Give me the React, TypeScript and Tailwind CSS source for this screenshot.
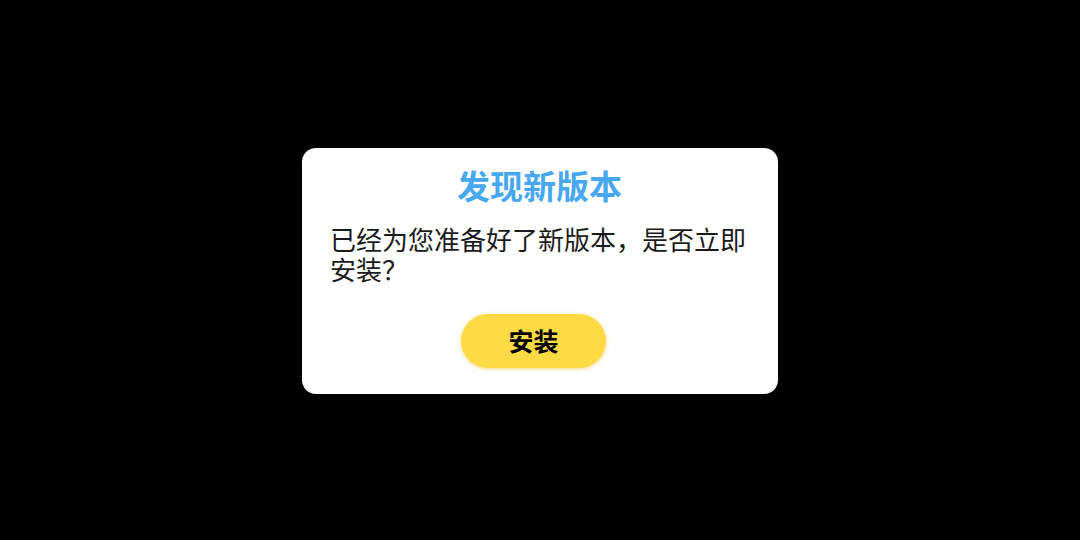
export default function App() {
  return (
    <div
      className="w-[1080px] h-[540px] bg-black flex items-center justify-center"
      style={{ fontFamily: '"Noto Sans CJK SC", "Noto Sans", sans-serif' }}
    >
      <div className="w-[476px] h-[246px] bg-white rounded-[14px] flex flex-col pl-[28px] pr-[29px] pt-[16px] mt-[2px]">
        <div className="text-center text-[33px] leading-[42px] font-bold text-[#47a7f0]">发现新版本</div>
        <div className="mt-[18px] text-[26px] leading-[30px] text-[#1a1a1a]">
          已经为您准备好了新版本，是否立即安装？
        </div>
        <div className="flex justify-center mt-[30px] mr-[12px]">
          <div className="w-[145px] h-[54px] rounded-full bg-[#fedb44] shadow-[0_1px_4px_rgba(230,190,40,0.6)] flex items-center justify-center text-[25px] font-bold text-black">
            安装
          </div>
        </div>
      </div>
    </div>
  );
}
